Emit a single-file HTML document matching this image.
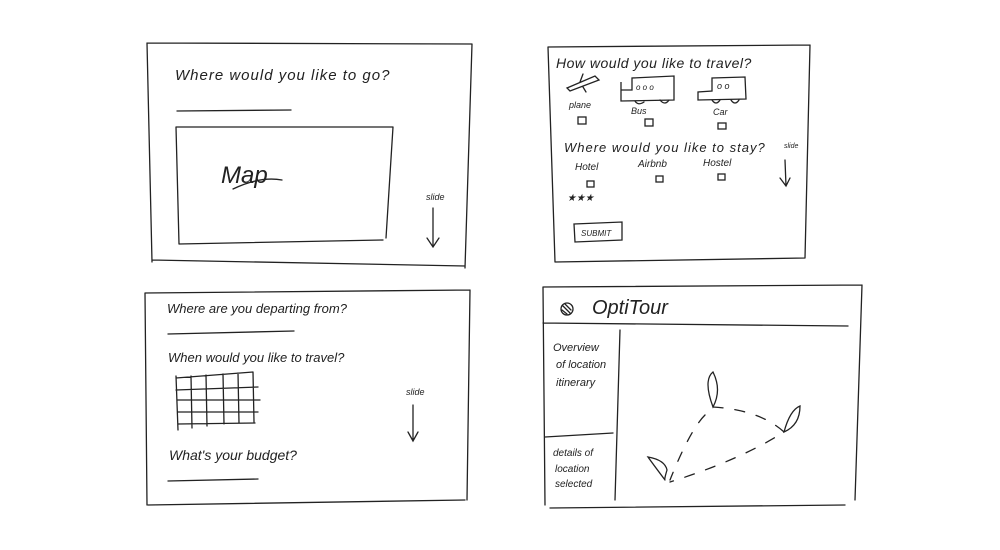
<!DOCTYPE html>
<html><head><style>
body{margin:0;background:#fff;width:1000px;height:550px;overflow:hidden}
svg{display:block}
text{font-family:"Liberation Sans",sans-serif;font-style:italic;fill:#222}
.l{stroke:#222;stroke-width:1.3;fill:none;stroke-linecap:round}
</style></head><body>
<svg width="1000" height="550" viewBox="0 0 1000 550">
<!-- Q1 -->
<path class="l" d="M147 43 L472 44 M147 43 L152 262 M472 44 L465 268 M152 260 L465 266"/>
<text x="175" y="80" font-size="15" letter-spacing="1">Where  would you like to go?</text>
<path class="l" d="M177 111 L291 110"/>
<path class="l" d="M176 127 L393 127 M176 127 L179 244 M393 127 L386 238 M179 244 L383 240"/>
<text x="221" y="183" font-size="24">Map</text>
<path class="l" d="M233 189 Q260 176 282 180"/>
<text x="426" y="200" font-size="9">slide</text>
<path class="l" d="M433 208 L433 246 M427 238 L433 247 L439 238"/>

<!-- Q2 -->
<path class="l" d="M548 47 L810 45 M548 47 L555 262 M810 45 L805 258 M555 262 L805 258"/>
<text x="556" y="68" font-size="14" letter-spacing="0.5">How would you like to travel?</text>
<path class="l" d="M567 88 L595 76 L599 80 L570 91 Z M580 82 L583 74 M583 87 L586 92"/>
<text x="569" y="108" font-size="9">plane</text>
<rect class="l" x="578" y="117" width="8" height="7"/>
<path class="l" d="M621 82 L621 90 L632 90 L632 78 L674 76 L674 100 L621 101 Z"/>
<text x="636" y="90" font-size="8">o o o</text>
<path class="l" d="M635 101 Q638 106 644 102 M660 100 Q665 106 669 100"/>
<text x="631" y="114" font-size="9">Bus</text>
<rect class="l" x="645" y="119" width="8" height="7"/>
<path class="l" d="M698 92 L698 100 L746 99 L745 77 L712 78 L712 91 Z"/>
<text x="717" y="89" font-size="9">o o</text>
<path class="l" d="M712 100 Q716 106 720 100 M731 100 Q735 106 739 100"/>
<text x="713" y="115" font-size="9">Car</text>
<rect class="l" x="718" y="123" width="8" height="6"/>
<text x="564" y="152" font-size="13" letter-spacing="1">Where   would you like to stay?</text>
<text x="784" y="148" font-size="7">slide</text>
<path class="l" d="M785 160 L786 186 M780 178 L786 186 L790 178"/>
<text x="575" y="170" font-size="10">Hotel</text>
<rect class="l" x="587" y="181" width="7" height="6"/>
<text x="567" y="201" font-size="10">★★★</text>
<text x="638" y="167" font-size="10">Airbnb</text>
<rect class="l" x="656" y="176" width="7" height="6"/>
<text x="703" y="166" font-size="10">Hostel</text>
<rect class="l" x="718" y="174" width="7" height="6"/>
<path class="l" d="M574 224 L622 222 L622 240 L575 242 Z"/>
<text x="581" y="236" font-size="8" font-style="normal">SUBMIT</text>

<!-- Q3 -->
<path class="l" d="M145 293 L470 290 M145 293 L147 505 M470 290 L467 500 M148 505 L465 500"/>
<text x="167" y="313" font-size="13">Where are you departing from?</text>
<path class="l" d="M168 334 L294 331"/>
<text x="168" y="362" font-size="13">When would you like to travel?</text>
<path class="l" d="M176 378 L253 372 M176 390 L258 387 M177 400 L260 400 M178 412 L258 412 M178 424 L255 423 M176 376 L178 430 M191 376 L192 428 M206 375 L207 426 M223 374 L224 424 M238 373 L239 423 M253 372 L254 422"/>
<text x="406" y="395" font-size="9">slide</text>
<path class="l" d="M413 405 L413 440 M408 432 L413 441 L418 432"/>
<text x="169" y="460" font-size="14">What's your budget?</text>
<path class="l" d="M168 481 L258 479"/>

<!-- Q4 -->
<path class="l" d="M543 287 L862 285 M543 287 L545 505 M862 285 L855 500 M543 323 L848 326 M620 330 L615 500 M545 437 L613 433 M550 508 L845 505"/>
<circle class="l" cx="567" cy="309" r="6"/>
<path class="l" d="M563 306 L570 313 M562 310 L567 314 M565 304 L571 310"/>
<text x="592" y="314" font-size="20" font-style="normal" font-weight="300">OptiTour</text>
<text x="553" y="351" font-size="11">Overview</text>
<text x="556" y="368" font-size="11">of location</text>
<text x="556" y="386" font-size="11">itinerary</text>
<text x="553" y="456" font-size="10">details of</text>
<text x="555" y="472" font-size="10">location</text>
<text x="555" y="487" font-size="10">selected</text>
<path class="l" d="M713 407 Q703 380 713 372 Q722 390 713 407 Z"/>
<path class="l" d="M784 432 Q790 410 800 406 Q800 425 784 432 Z"/>
<path class="l" d="M665 480 Q650 460 648 457 Q665 460 667 470 Q664 480 665 480"/>
<path class="l" stroke-dasharray="10 12" d="M705 415 Q690 430 670 480 M713 407 Q760 410 784 432 Q740 460 670 482"/>
</svg>
</body></html>
